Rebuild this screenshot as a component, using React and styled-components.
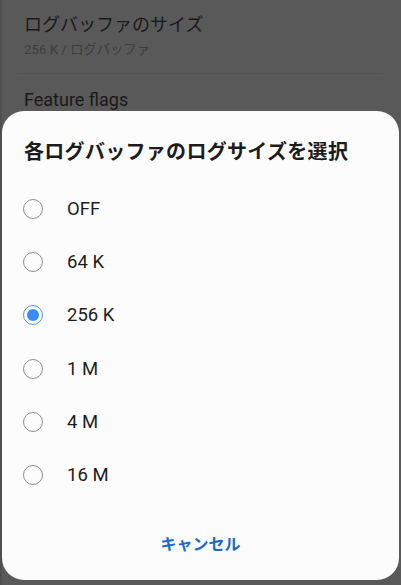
import React, { useState } from "react";
import styled, { createGlobalStyle } from "styled-components";

const GlobalStyle = createGlobalStyle`
  html, body {
    margin: 0;
    padding: 0;
    background-color: #4c4c4c;
  }
  body {
    font-family: Roboto, "Noto Sans CJK JP", sans-serif;
  }
`;

const Screen = styled.div`
  position: relative;
  width: 401px;
  height: 585px;
  overflow: hidden;
  background-color: #595959;
  border-left: 2px solid #505050;
  box-sizing: border-box;
`;

const SettingsList = styled.div`
  display: flex;
  flex-direction: column;
  padding: 0 18px 0 15px;
`;

const SettingItem = styled.div`
  display: flex;
  flex-direction: column;
  padding: ${(p) => (p.divider ? "12px 0 14px 7px" : "13px 0 11px 7px")};
  border-bottom: ${(p) => (p.divider ? "1px solid #525252" : "none")};
`;

const SettingTitle = styled.div`
  font-family: Roboto, "Noto Sans CJK JP", sans-serif;
  font-size: 18px;
  line-height: 26px;
  color: #191919;
`;

const SettingSub = styled.div`
  margin-top: 3px;
  font-family: Roboto, "Noto Sans CJK JP", sans-serif;
  font-size: 13.3px;
  line-height: 18px;
  color: #3d3d3d;
`;

const Sheet = styled.div`
  position: absolute;
  left: 0;
  right: 2px;
  top: 111px;
  height: 469px;
  background-color: #fcfcfc;
  border-radius: 22px;
  display: flex;
  flex-direction: column;
  padding: 27px 0 0;
  box-sizing: border-box;
`;

const SheetTitle = styled.h2`
  margin: 0 0 16px 22px;
  font-family: Roboto, "Noto Sans CJK JP", sans-serif;
  font-size: 20px;
  line-height: 28px;
  font-weight: 700;
  color: #1c1c1c;
  letter-spacing: 0.3px;
`;

const OptionList = styled.div`
  display: flex;
  flex-direction: column;
`;

const OptionRow = styled.label`
  display: flex;
  align-items: center;
  gap: 24px;
  height: 53.3px;
  padding-left: 21px;
  cursor: pointer;
`;

const Radio = styled.span`
  width: 20px;
  height: 20px;
  box-sizing: border-box;
  border-radius: 50%;
  border: 1.5px solid ${(p) => (p.checked ? "#5b96e6" : "#8e8e8e")};
  display: flex;
  align-items: center;
  justify-content: center;
  flex-shrink: 0;

  &::after {
    content: "";
    width: 12px;
    height: 12px;
    border-radius: 50%;
    background-color: #3a8bf6;
    display: ${(p) => (p.checked ? "block" : "none")};
  }
`;

const OptionText = styled.span`
  font-family: Roboto, "Noto Sans CJK JP", sans-serif;
  font-size: 18.5px;
  color: #1c1c1c;
`;

const Footer = styled.div`
  display: flex;
  justify-content: center;
  margin-top: 17px;
`;

const CancelButton = styled.button`
  border: none;
  background: none;
  padding: 12px 20px;
  font-family: Roboto, "Noto Sans CJK JP", sans-serif;
  font-size: 16px;
  font-weight: 700;
  color: #1a6cc6;
  cursor: pointer;
`;

const options = ["OFF", "64 K", "256 K", "1 M", "4 M", "16 M"];

const App = () => {
  const [selected, setSelected] = useState("256 K");

  return (
    <>
      <GlobalStyle />
      <Screen>
        <SettingsList>
          <SettingItem divider>
            <SettingTitle>ログバッファのサイズ</SettingTitle>
            <SettingSub>256 K / ログバッファ</SettingSub>
          </SettingItem>
          <SettingItem>
            <SettingTitle>Feature flags</SettingTitle>
          </SettingItem>
        </SettingsList>
        <Sheet>
          <SheetTitle>各ログバッファのログサイズを選択</SheetTitle>
          <OptionList>
            {options.map((o) => (
              <OptionRow key={o} onClick={() => setSelected(o)}>
                <Radio checked={selected === o} />
                <OptionText>{o}</OptionText>
              </OptionRow>
            ))}
          </OptionList>
          <Footer>
            <CancelButton>キャンセル</CancelButton>
          </Footer>
        </Sheet>
      </Screen>
    </>
  );
};

export default App;
